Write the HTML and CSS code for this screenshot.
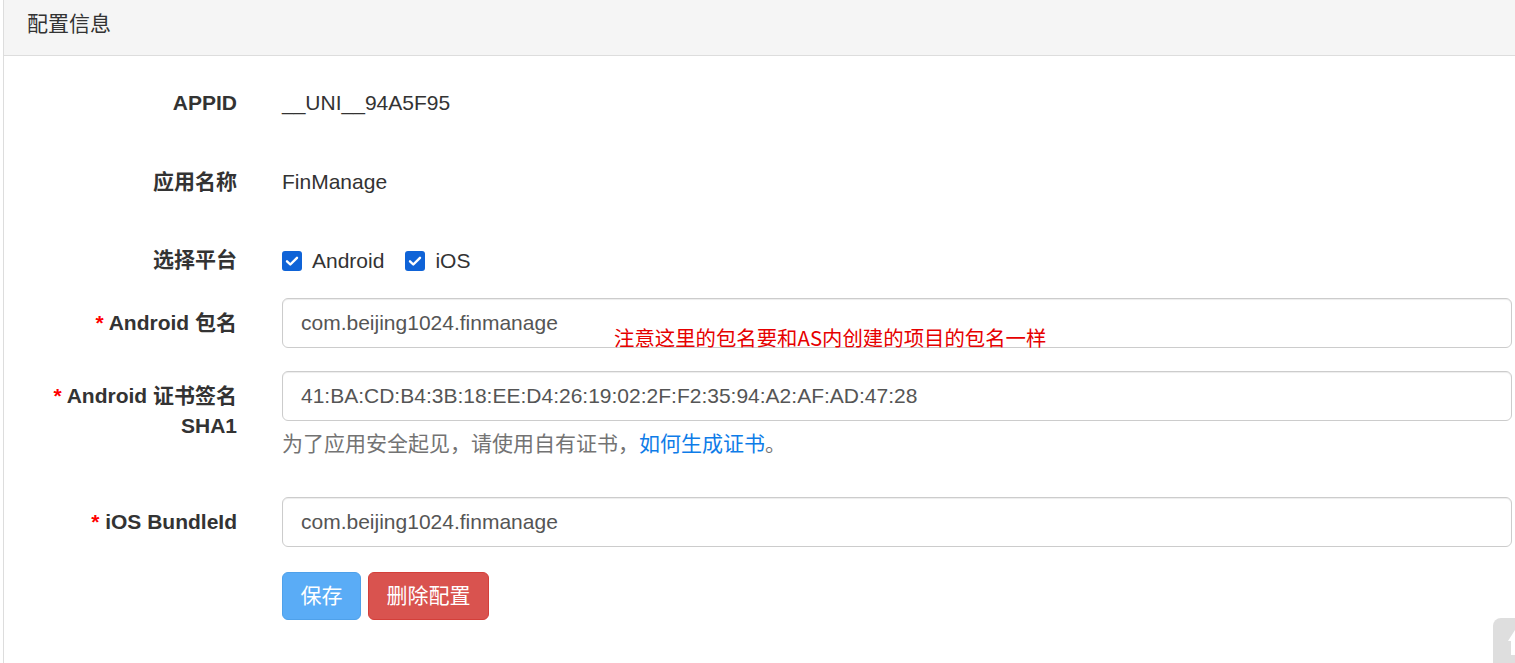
FILE: index.html
```html
<!DOCTYPE html>
<html lang="zh-CN">
<head>
<meta charset="utf-8">
<title>配置信息</title>
<link rel="stylesheet" href="styles.css">
</head>
<body>
<div class="panel">
  <div class="panel-heading">配置信息</div>
  <div class="panel-body">
    <form class="form">
      <div class="group group-static">
        <label class="label">APPID</label>
        <div class="control static">__UNI__94A5F95</div>
      </div>
      <div class="group group-static">
        <label class="label">应用名称</label>
        <div class="control static">FinManage</div>
      </div>
      <div class="group group-check">
        <label class="label">选择平台</label>
        <div class="control checks">
          <span class="check"><span class="box"><svg viewBox="0 0 20 20" width="20" height="20"><path d="M5 10.3l3.3 3.2L15 6.8" fill="none" stroke="#fff" stroke-width="2.4" stroke-linecap="round" stroke-linejoin="round"/></svg></span>Android</span>
          <span class="check"><span class="box"><svg viewBox="0 0 20 20" width="20" height="20"><path d="M5 10.3l3.3 3.2L15 6.8" fill="none" stroke="#fff" stroke-width="2.4" stroke-linecap="round" stroke-linejoin="round"/></svg></span>iOS</span>
        </div>
      </div>
      <div class="group">
        <label class="label"><span class="req">*</span> Android 包名</label>
        <div class="control field-wrap">
          <div class="input">com.beijing1024.finmanage</div>
          <span class="note">注意这里的包名要和AS内创建的项目的包名一样</span>
        </div>
      </div>
      <div class="group">
        <label class="label label-narrow"><span class="req">*</span> Android 证书签名 SHA1</label>
        <div class="control">
          <div class="input">41:BA:CD:B4:3B:18:EE:D4:26:19:02:2F:F2:35:94:A2:AF:AD:47:28</div>
          <p class="help">为了应用安全起见，请使用自有证书，<a class="link" href="#">如何生成证书</a>。</p>
        </div>
      </div>
      <div class="group group-last">
        <label class="label"><span class="req">*</span> iOS BundleId</label>
        <div class="control">
          <div class="input">com.beijing1024.finmanage</div>
        </div>
      </div>
      <div class="group group-buttons">
        <span class="label"></span>
        <div class="control buttons">
          <button type="button" class="btn btn-save">保存</button>
          <button type="button" class="btn btn-delete">删除配置</button>
        </div>
      </div>
    </form>
  </div>
</div>
<div class="totop"><svg viewBox="0 0 30 50" width="30" height="50"><path d="M8 0H30V50H0V8A8 8 0 0 1 8 0Z" fill="#dedede"/><path d="M22 12L15 23H18V37H22Z" fill="#fff"/></svg></div>
</body>
</html>
```
FILE: styles.css
```css
html, body {
  margin: 0;
  padding: 0;
}
body {
  width: 1515px;
  height: 663px;
  overflow: hidden;
  position: relative;
  background: #fff;
  font-family: "Liberation Sans", Arial, "Noto Sans CJK SC", sans-serif;
  font-size: 21px;
  line-height: 30px;
  color: #333;
}
.panel {
  margin-left: 3px;
  width: 1560px;
  height: 663px;
  border-left: 1px solid #ddd;
  box-sizing: border-box;
  overflow: hidden;
}
.panel-heading {
  background: #f5f5f5;
  border-bottom: 1px solid #ddd;
  padding: 9px 23px 16px;
  line-height: 30px;
  color: #333;
}
.panel-body {
  padding-top: 22px;
}
.form {
  width: 1508px;
}
.group {
  display: grid;
  grid-template-columns: 233px 1fr;
  column-gap: 45px;
  margin-bottom: 23px;
}
.group-static {
  height: 56px;
}
.group-check {
  height: 40px;
  margin-bottom: 22px;
}
.group-last {
  margin-bottom: 25px;
}
.group-buttons {
  margin-bottom: 0;
}
.label {
  text-align: right;
  font-weight: bold;
  padding-top: 10px;
  padding-left: 30px;
}
.group-check .label {
  padding-top: 9px;
}
.req {
  color: #f00;
}
.control.static {
  padding-top: 10px;
}
.checks {
  display: flex;
  padding-top: 9px;
  gap: 21px;
}
.check {
  display: inline-flex;
  align-items: center;
  gap: 10px;
}
.box {
  width: 20px;
  height: 20px;
  border-radius: 3px;
  background: #0f63d7;
  display: inline-flex;
}
.field-wrap {
  position: relative;
}
.input {
  height: 50px;
  box-sizing: border-box;
  border: 1px solid #ccc;
  border-radius: 6px;
  padding: 9px 18px;
  color: #555;
  box-shadow: inset 0 1px 1px rgba(0,0,0,0.075);
  white-space: nowrap;
}
.note {
  position: absolute;
  left: 332px;
  top: 28px;
  font-family: "Noto Sans CJK SC", sans-serif;
  font-size: 20.4px;
  line-height: 22px;
  color: #e60000;
  white-space: nowrap;
}
.help {
  margin: 8px 0 15px;
  color: #737373;
}
.link {
  color: #0e7ce8;
  text-decoration: none;
}
.buttons {
  display: flex;
  gap: 7px;
}
.btn {
  font-family: inherit;
  font-size: 21px;
  line-height: 30px;
  padding: 8px 17.5px;
  border-radius: 6px;
  color: #fff;
  cursor: pointer;
}
.btn-save {
  background: #5aacf6;
  border: 1px solid #4fa1ea;
}
.btn-delete {
  background: #d9534f;
  border: 1px solid #d43f3a;
}
.totop {
  position: absolute;
  left: 1493px;
  top: 618px;
  width: 30px;
  height: 50px;
}
.totop svg {
  display: block;
}
```
